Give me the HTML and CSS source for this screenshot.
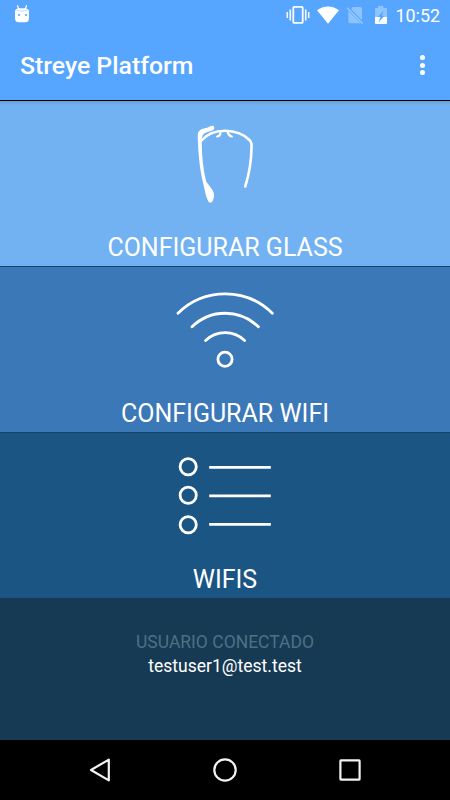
FILE: index.html
```html
<!DOCTYPE html>
<html lang="es">
<head>
  <meta charset="UTF-8" />
  <meta name="viewport" content="width=device-width, initial-scale=1.0"/>
  <title>Streye Platform</title>
  <link rel="stylesheet" href="styles.css">
</head>
<body>

<div class="screen">
  <header class="header">
    <div class="status-bar">
      <svg class="debug-icon" width="16" height="18" viewBox="0 0 16 18">
        <path d="M3.4 0.3 L4.8 4.5 M12.6 0.3 L11.2 4.5" stroke="#fff" stroke-width="1.2" />
        <path d="M1 6 Q2 3.2 5 3.2 H11 Q14 3.2 15 6 V13 Q15 17.2 11.5 17.2 H4.5 Q1 17.2 1 13 Z" fill="#fff" />
        <path d="M2.5 5.2 Q8 7.2 13.5 5.2" stroke="#cfe5ff" stroke-width="1.3" fill="none" />
        <path d="M4 9 H6 V11 H4 Z M11 9 H13 V11 H11 Z" fill="#7dbaff" />
      </svg>
      <div class="status-icons">
        <svg class="vibrate-icon" width="24" height="20" viewBox="0 0 24 20" fill="none" stroke="#fff">
          <rect x="7.3" y="1.9" width="9.4" height="16" rx="1" stroke-width="1.8" />
          <path d="M4.3 4.5 V15.5 M19.7 4.5 V15.5" stroke-width="1.6" />
          <path d="M1.3 7 V13 M22.7 7 V13" stroke-width="1.5" />
        </svg>
        <svg class="signal-icon" width="22" height="18" viewBox="0 0 22 18">
          <path d="M0 4.2 Q4.7 0.4 11 0.4 T22 4.2 L11 17.8 Z" fill="#fff" />
        </svg>
        <svg class="sim-icon" width="18" height="20" viewBox="0 0 18 20">
          <path d="M6.8 2 H14.5 Q16 2 16 3.5 V15.2 L5 4 Z M2.4 6 L14.8 18.2 H4 Q2.4 18.2 2.4 16.8 Z" fill="#8dc3ff" />
          <path d="M1 2.8 L16.6 18.5" stroke="#9bcaff" stroke-width="1.3" />
        </svg>
        <svg class="battery-icon" width="14" height="20" viewBox="0 0 14 20">
          <path d="M4 1 H9.4 V3 H12 Q13 3 13 4 V12 H1 V4 Q1 3 2 3 H4 Z" fill="#8dc3ff" />
          <path d="M1 12 H13 V18 Q13 19 12 19 H2 Q1 19 1 18 Z" fill="#fff" />
          <path d="M9.6 5.5 L3.7 12 H6.4 L4.6 17.4 L10.4 10.7 H7.8 Z" fill="#56a6ff" />
        </svg>
        <span class="clock">10:52</span>
      </div>
    </div>
    <div class="toolbar">
      <h1>Streye Platform</h1>
      <button class="menu-button" aria-label="Menú">
        <span class="dot"></span>
        <span class="dot"></span>
        <span class="dot"></span>
      </button>
    </div>
  </header>

  <main class="options">
    <a class="option option-glass">
      <svg width="90" height="100" viewBox="0 0 90 100">
        <path d="M18 18 Q19.5 14.5 24 13.6 Q28 12.8 31 11 Q34 10.2 34.2 12 V14 Q33.5 15.6 30 16.2 Q24 17.8 22.8 20 Q21.4 23 21.7 27 C21.9 42 23.2 55 26.2 66.5 L32.8 75.5 Q34.5 79 34 82 L32.7 86 Q31 88.8 28.7 87 Q27 84 25.8 80 Q24.8 75 23.2 68.5 C19.2 52 18.2 36 17.7 21 Z" fill="#fff" />
        <path d="M21.5 25.5 Q30 15.8 45 15.8 Q61 16 70 25.5 Q71.7 27.5 71.6 31 C71.4 44 69 60 65.2 71.5" fill="none" stroke="#fff" stroke-width="2.6" stroke-linecap="round" />
        <path d="M40.5 17 Q40.6 21 37.2 21.5 M47.7 17 Q48.4 20.8 51.8 21.5" fill="none" stroke="#fff" stroke-width="2.2" stroke-linecap="round" />
      </svg>
      <span class="option-label">CONFIGURAR GLASS</span>
    </a>

    <a class="option option-wifi">
      <svg width="120" height="100" viewBox="0 0 120 100" fill="none" stroke="#fff" stroke-width="2.8" stroke-linecap="round">
        <path d="M13 33.2 A67 67 0 0 1 107.3 33.2" />
        <path d="M27 46.8 A47.4 47.4 0 0 1 93.4 46.8" />
        <path d="M40.6 60.5 A28 28 0 0 1 79.6 60.5" />
        <circle cx="60" cy="79.3" r="7.1" />
      </svg>
      <span class="option-label">CONFIGURAR WIFI</span>
    </a>

    <a class="option option-list">
      <svg width="120" height="100" viewBox="0 0 120 100" fill="none" stroke="#fff" stroke-width="2.8">
        <circle cx="23.2" cy="28.7" r="8.1" />
        <circle cx="23.2" cy="57.2" r="8.1" />
        <circle cx="23.2" cy="86.8" r="8.1" />
        <path d="M44.2 29.4 H105.8 M44.2 57.8 H105.8 M44.2 86.3 H105.8" />
      </svg>
      <span class="option-label">WIFIS</span>
    </a>
  </main>

  <footer class="user-info">
    <p class="user-title">USUARIO CONECTADO</p>
    <p class="user-mail">testuser1@test.test</p>
  </footer>

  <nav class="nav-bar">
    <svg width="30" height="30" viewBox="0 0 30 30">
      <path d="M6 15 L23.8 4.6 V25.4 Z" />
    </svg>
    <svg width="30" height="30" viewBox="0 0 30 30">
      <circle cx="15" cy="15" r="10.7" />
    </svg>
    <svg width="30" height="30" viewBox="0 0 30 30">
      <rect x="5.4" y="5.4" width="19.2" height="19.2" rx="0.6" />
    </svg>
  </nav>
</div>

</body>
</html>
```
FILE: styles.css
```css
* {
  box-sizing: border-box;
}

body {
  margin: 0;
  background: #000;
  font-family: Roboto, "Open Sans", sans-serif;
  color: #fff;
}

.screen {
  display: flex;
  flex-direction: column;
  width: 450px;
  height: 800px;
  overflow: hidden;
}

.header {
  height: 101px;
  flex-shrink: 0;
  background: #56a6ff;
  border-bottom: 1px solid #000;
}

.status-bar {
  display: flex;
  justify-content: space-between;
  align-items: center;
  height: 30px;
  padding: 0 10px 0 14px;
}

.debug-icon {
  margin-bottom: 3px;
}

.status-icons {
  display: flex;
  align-items: center;
}

.signal-icon {
  margin-left: 7px;
}

.sim-icon {
  margin-left: 7px;
}

.battery-icon {
  margin-left: 10px;
}

.clock {
  margin-left: 7px;
  padding-top: 2px;
  font-size: 17.9px;
  line-height: 28px;
}

.toolbar {
  display: flex;
  justify-content: space-between;
  align-items: center;
  height: 70px;
  padding: 0 19px 0 20px;
}

.toolbar h1 {
  margin: 2px 0 0;
  font-size: 24.8px;
  line-height: 30px;
  font-weight: 500;
}

.menu-button {
  display: flex;
  flex-direction: column;
  align-items: center;
  gap: 2.5px;
  padding: 0;
  width: 17px;
  border: none;
  background: transparent;
}

.dot {
  width: 5px;
  height: 5px;
  border-radius: 50%;
  background: #fff;
}

.option {
  display: flex;
  flex-direction: column;
  align-items: center;
  height: 166px;
  padding-bottom: 3px;
  border-bottom: 1px solid #164469;
}

.option-glass {
  background: linear-gradient(#679fd8, #72b2f2 4px);
  padding-top: 14px;
}

.option-wifi {
  background: #3b78b7;
  padding-top: 13px;
}

.option-list {
  background: #1b5583;
  height: 165px;
  padding-top: 5px;
  border-bottom: none;
}

.option svg {
  flex-shrink: 0;
}

.option-label {
  margin-top: auto;
  font-size: 25px;
  line-height: 30px;
}

.user-info {
  flex: 1;
  background: #163a54;
  padding-top: 32px;
  text-align: center;
}

.user-info p {
  margin: 0;
  font-size: 17.5px;
  line-height: 24px;
}

.user-info .user-title {
  color: #4e7085;
}

.nav-bar {
  display: flex;
  justify-content: center;
  align-items: center;
  gap: 95px;
  height: 60px;
  background: #000;
}

.nav-bar svg {
  fill: none;
  stroke: #f2f2f2;
  stroke-width: 2.2;
  stroke-linejoin: round;
}
```
